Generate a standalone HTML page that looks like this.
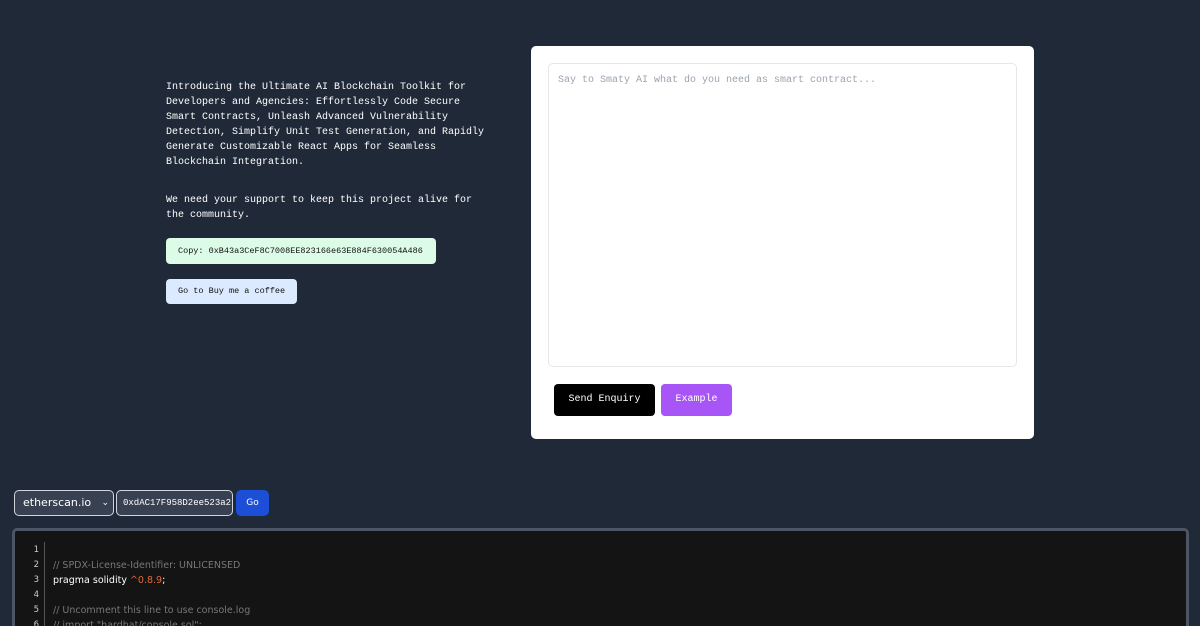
<!DOCTYPE html>
<html style="height:626px;overflow:hidden"><head><style>
*{margin:0;padding:0;box-sizing:border-box}
body{width:1200px;height:626px;overflow:hidden;background:#1f2937;font-family:"Liberation Mono",monospace;position:relative}
.intro{position:absolute;left:166px;top:80px;width:330px;color:#fff;font-size:10px;line-height:15px;white-space:pre}
.btn1{position:absolute;left:166px;top:238px;width:270px;height:26px;background:#dcfce7;border-radius:4px;font-size:8.5px;line-height:26px;padding-left:12px;color:#111}
.btn2{position:absolute;left:166px;top:279px;width:131px;height:25px;background:#dbeafe;border-radius:4px;font-size:8.5px;line-height:25px;padding-left:12px;color:#111}
.card{position:absolute;left:531px;top:46px;width:503px;height:393px;background:#fff;border-radius:5px}
.ta{position:absolute;left:17px;top:17px;width:469px;height:304px;border:1px solid #e5e7eb;border-radius:5px;color:#9ca3af;font-size:10px;padding:11px 9px}
.send{position:absolute;left:23px;top:338px;width:101px;height:32px;background:#000;color:#fff;border-radius:4px;font-size:10px;text-align:center;line-height:32px}
.ex{position:absolute;left:130px;top:338px;width:71px;height:32px;background:#a855f7;color:#fff;border-radius:4px;font-size:10px;text-align:center;line-height:32px}
.sel{position:absolute;left:14px;top:490px;width:100px;height:26px;border:1px solid #d1d5db;border-radius:5px;background:#374151;color:#fff;font-family:"DejaVu Sans",sans-serif;font-size:11px;line-height:24px;padding-left:8px}
.inp{position:absolute;left:116px;top:490px;width:117px;height:26px;border:1px solid #d1d5db;border-radius:5px;background:#374151;color:#fff;font-size:9px;line-height:24px;padding-left:6px;overflow:hidden;white-space:nowrap}
.go{position:absolute;left:236px;top:490px;width:33px;height:26px;border-radius:5px;background:#1d4ed8;color:#fff;font-size:9px;line-height:26px;text-align:center;font-family:"DejaVu Sans",sans-serif}
.code{position:absolute;left:12px;top:528px;width:1177px;height:98px;background:#141414;border:3px solid #4b5563;border-bottom:none;border-radius:5px 5px 0 0}
.ln{position:absolute;left:8px;top:12px;width:16px;text-align:right;color:#ccc;font-family:"DejaVu Sans",sans-serif;font-size:8.5px;line-height:15px}
.bar{position:absolute;left:29px;top:11px;width:1px;height:100px;background:#555}
.src{position:absolute;left:38px;top:12px;color:#fff;font-family:"DejaVu Sans",sans-serif;font-size:9.5px;line-height:15px;white-space:pre}
.c{color:#777}.n{color:#e2673a}
</style></head><body>
<div class="intro">Introducing the Ultimate AI Blockchain Toolkit for
Developers and Agencies: Effortlessly Code Secure
Smart Contracts, Unleash Advanced Vulnerability
Detection, Simplify Unit Test Generation, and Rapidly
Generate Customizable React Apps for Seamless
Blockchain Integration.</div>
<div class="intro" style="top:193px">We need your support to keep this project alive for
the community.</div>
<div class="btn1">Copy: 0xB43a3CeF8C7008EE823166e63E884F630054A486</div>
<div class="btn2">Go to Buy me a coffee</div>
<div class="card">
<div class="ta">Say to Smaty AI what do you need as smart contract...</div>
<div class="send">Send Enquiry</div>
<div class="ex">Example</div>
</div>
<div class="sel">etherscan.io <span style="float:right;margin-right:4px;font-size:9px">⌄</span></div>
<div class="inp">0xdAC17F958D2ee523a2</div>
<div class="go">Go</div>
<div class="code">
<div class="ln">1<br>2<br>3<br>4<br>5<br>6</div>
<div class="bar"></div>
<div class="src">
<span class="c">// SPDX-License-Identifier: UNLICENSED</span>
pragma solidity <span class="n">^0.8.9</span>;

<span class="c">// Uncomment this line to use console.log</span>
<span class="c">// import "hardhat/console.sol";</span></div>
</div>
</body></html>
